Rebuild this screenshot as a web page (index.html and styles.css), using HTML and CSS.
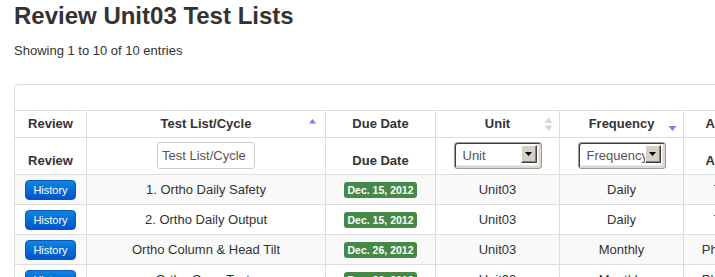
FILE: index.html
```html
<!DOCTYPE html>
<html lang="en">
<head>
    <meta charset="UTF-8">
    <title>Review Unit03 Test Lists</title>
    <link rel="stylesheet" href="styles.css">
</head>
<body>
    <div class="page">
        <h2 class="title">Review Unit03 Test Lists</h2>
        <div class="info">Showing 1 to 10 of 10 entries</div>

        <!-- Tabel daftar test -->
        <div class="grid-box">
            <div class="toolbar"></div>
            <table class="lists">
                <colgroup>
                    <col class="c-review">
                    <col class="c-name">
                    <col class="c-due">
                    <col class="c-unit">
                    <col class="c-freq">
                    <col class="c-assign">
                </colgroup>
                <thead>
                    <tr class="head-sort">
                        <th>Review</th>
                        <th>Test List/Cycle
                            <svg class="sort-icon" width="9" height="15" viewBox="0 0 9 15"><path d="M1 6.5 L4.5 2 L8 6.5 Z" fill="#7b80dc"/></svg>
                        </th>
                        <th>Due Date</th>
                        <th>Unit
                            <svg class="sort-icon" width="9" height="15" viewBox="0 0 9 15"><path d="M0.5 6 L4.5 0.5 L8.5 6 Z" fill="#d6d6d6"/><path d="M0.5 8.5 L8.5 8.5 L4.5 14 Z" fill="#d6d6d6"/></svg>
                        </th>
                        <th>Frequency
                            <svg class="sort-icon" width="9" height="15" viewBox="0 0 9 15"><path d="M0.5 9 L8.5 9 L4.5 14 Z" fill="#7b80dc"/></svg>
                        </th>
                        <th>Assigned To</th>
                    </tr>
                    <tr class="head-filter">
                        <th>Review</th>
                        <th><input class="filter-input" type="text" placeholder="Test List/Cycle"></th>
                        <th>Due Date</th>
                        <th>
                            <div class="fake-select">
                                <span class="sel-text">Unit</span>
                                <span class="sel-btn"><svg width="7" height="4" viewBox="0 0 7 4"><path d="M0 0 L7 0 L3.5 4 Z" fill="#000"/></svg></span>
                            </div>
                        </th>
                        <th>
                            <div class="fake-select">
                                <span class="sel-text">Frequency</span>
                                <span class="sel-btn"><svg width="7" height="4" viewBox="0 0 7 4"><path d="M0 0 L7 0 L3.5 4 Z" fill="#000"/></svg></span>
                            </div>
                        </th>
                        <th>Assigned To</th>
                    </tr>
                </thead>
                <tbody>
                    <tr>
                        <td><a class="btn-history" href="#">History</a></td>
                        <td>1. Ortho Daily Safety</td>
                        <td><span class="due-label">Dec. 15, 2012</span></td>
                        <td>Unit03</td>
                        <td>Daily</td>
                        <td>Therapists</td>
                    </tr>
                    <tr>
                        <td><a class="btn-history" href="#">History</a></td>
                        <td>2. Ortho Daily Output</td>
                        <td><span class="due-label">Dec. 15, 2012</span></td>
                        <td>Unit03</td>
                        <td>Daily</td>
                        <td>Therapists</td>
                    </tr>
                    <tr>
                        <td><a class="btn-history" href="#">History</a></td>
                        <td>Ortho Column &amp; Head Tilt</td>
                        <td><span class="due-label">Dec. 26, 2012</span></td>
                        <td>Unit03</td>
                        <td>Monthly</td>
                        <td>Physics Group</td>
                    </tr>
                    <tr>
                        <td><a class="btn-history" href="#">History</a></td>
                        <td>Ortho Cone Tests</td>
                        <td><span class="due-label">Dec. 26, 2012</span></td>
                        <td>Unit03</td>
                        <td>Monthly</td>
                        <td>Physics Group</td>
                    </tr>
                </tbody>
            </table>
        </div>
    </div>
</body>
</html>
```

FILE: styles.css
```css
/* Reset dasar */
* {
    box-sizing: border-box;
}

html, body {
    margin: 0;
    height: 100%;
}

body {
    font-family: "Liberation Sans", Arial, sans-serif;
    color: #333;
    background: #fff;
    overflow: hidden;
}

.page {
    padding-left: 14px;
}

/* Judul halaman */
.title {
    margin: 0;
    padding-top: 2px;
    font-size: 24px;
    line-height: 28px;
    font-weight: bold;
    color: #333;
}

.info {
    margin-top: 12px;
    font-size: 13px;
    line-height: 18px;
}

/* Kotak tabel */
.grid-box {
    margin-top: 24px;
    width: 800px;
    border: 1px solid #ddd;
    border-radius: 4px;
}

.toolbar {
    height: 25px;
}

.lists {
    table-layout: fixed;
    border-collapse: separate;
    border-spacing: 0;
    width: 789px;
    font-size: 13px;
}

.c-review { width: 71px; }
.c-name { width: 239px; }
.c-due { width: 110px; }
.c-unit { width: 124px; }
.c-freq { width: 124px; }
.c-assign { width: 121px; }

.lists th,
.lists td {
    border-top: 1px solid #ddd;
    border-left: 1px solid #ddd;
    text-align: center;
    white-space: nowrap;
    overflow: hidden;
}

.lists th:first-child,
.lists td:first-child {
    border-left: none;
}

.lists th {
    font-weight: bold;
    color: #333;
}

.head-sort th {
    position: relative;
    padding: 4px 8px;
    line-height: 18px;
    vertical-align: middle;
}

.sort-icon {
    position: absolute;
    top: 6px;
    right: 6px;
}

.head-sort th:nth-child(2) .sort-icon {
    right: 8px;
}

.head-filter th {
    padding: 4px 8px 5px;
    line-height: 16px;
    height: 37px;
    vertical-align: bottom;
}

/* Input filter */
.filter-input {
    display: block;
    margin: 0 auto;
    width: 98px;
    height: 27px;
    padding: 4px;
    border: 1px solid #ccc;
    border-radius: 3px;
    font-family: "Liberation Sans", Arial, sans-serif;
    font-size: 13px;
    color: #555;
    background: #fff;
}

.filter-input::placeholder {
    color: #555;
}

/* Select gaya windows klasik */
.fake-select {
    position: relative;
    margin: 0 auto;
    width: 88px;
    height: 27px;
    border: 1px solid #9a9a9a;
    border-radius: 3px;
    background: #fff;
    box-shadow: inset 1px 1px 0 #404040, inset -2px -2px 0 #dcd8cf, inset -3px -3px 0 #ece9e2;
    text-align: left;
    overflow: hidden;
}

.sel-text {
    display: block;
    padding: 5px 0 0 8px;
    width: 67px;
    overflow: hidden;
    font-weight: normal;
    font-size: 13px;
    line-height: 16px;
    color: #555;
}

.sel-btn {
    position: absolute;
    top: 2px;
    right: 4px;
    width: 16px;
    height: 18px;
    background: #d4d0c8;
    border: 1px solid;
    border-color: #fff #404040 #404040 #fff;
    box-shadow: inset -1px -1px 0 #808080;
    display: flex;
    align-items: center;
    justify-content: center;
}

/* Baris data */
.lists td {
    padding: 5px 8px 4px;
    line-height: 20px;
    height: 30px;
    vertical-align: top;
    color: #333;
}

.lists tbody tr:nth-child(odd) td {
    background: #f9f9f9;
}

.btn-history {
    display: inline-block;
    vertical-align: top;
    height: 20px;
    padding: 0 7px;
    line-height: 19px;
    font-size: 11px;
    color: #fff;
    text-decoration: none;
    background: linear-gradient(#0a86e2, #0052c9);
    border: 1px solid #0b58b8;
    border-radius: 4px;
}

.due-label {
    display: inline-block;
    vertical-align: top;
    margin-top: 2px;
    height: 16px;
    padding: 0 4px;
    line-height: 16px;
    font-size: 10.5px;
    font-weight: bold;
    color: #fff;
    background: #468847;
    border-radius: 3px;
}
```
